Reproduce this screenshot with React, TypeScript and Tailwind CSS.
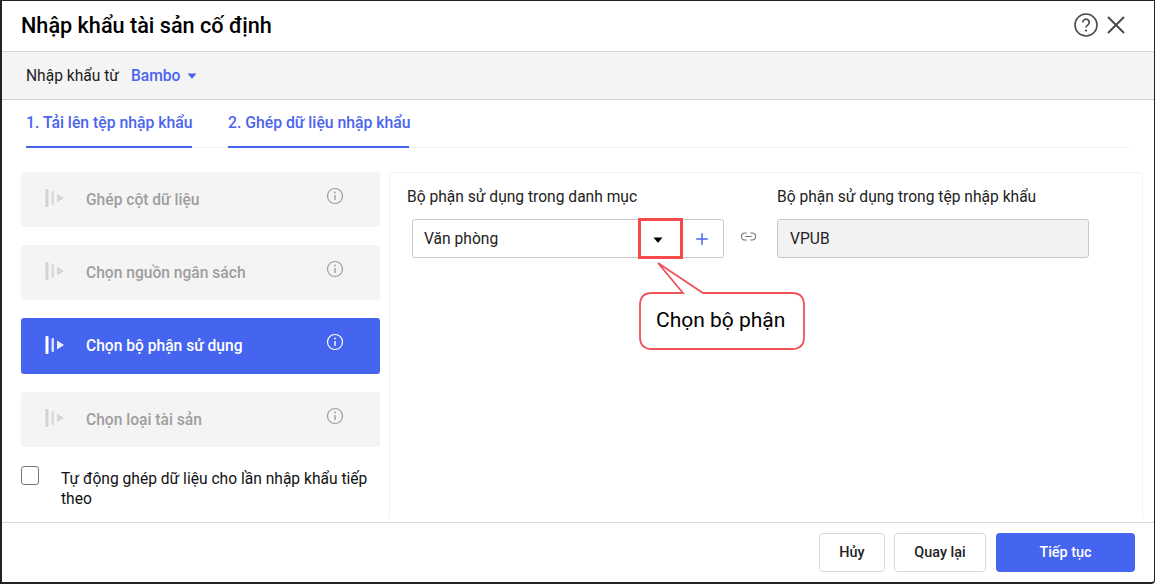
import React from 'react';
import { Plus, Link2 } from 'lucide-react';

const StepIcon = ({ className }: { className: string }) => (
  <svg width="20" height="20" viewBox="0 0 20 20" className={className} fill="currentColor">
    <rect x="0.5" y="1" width="3" height="18" rx="1" />
    <rect x="6.5" y="3" width="2.5" height="14" rx="1" opacity="0.8" />
    <path d="M12 5.5 L19 10 L12 14.5 Z" opacity="0.9" />
  </svg>
);

const InfoIcon = ({ className }: { className: string }) => (
  <svg width="18" height="18" viewBox="0 0 18 18" fill="none" className={className} stroke="currentColor">
    <circle cx="9" cy="9" r="7.5" strokeWidth="1.2" />
    <path d="M9 8v5" strokeWidth="1.4" />
    <circle cx="9" cy="5.5" r="0.9" fill="currentColor" stroke="none" />
  </svg>
);

const Caret = ({ className }: { className: string }) => (
  <svg width="10" height="6" viewBox="0 0 10 6" className={className} fill="currentColor">
    <path d="M0.5 0.5 H9.5 L5.6 5.2 Q5 5.8 4.4 5.2 Z" />
  </svg>
);

const steps = [
  { label: 'Ghép cột dữ liệu', active: false },
  { label: 'Chọn nguồn ngân sách', active: false },
  { label: 'Chọn bộ phận sử dụng', active: true },
  { label: 'Chọn loại tài sản', active: false },
];

export default function App() {
  return (
    <div className="w-[1155px] h-[584px] bg-white overflow-hidden font-['Roboto',sans-serif] text-[#111]">
      <div className="relative h-[584px] w-[1155px] border-l-[2px] border-t border-r border-b-[2px] border-[#222] rounded-br-[4px] flex flex-col">
        <header className="h-[51px] shrink-0 flex items-center justify-between pl-[19px] pr-[29px] border-b border-[#d4d4d4]">
          <h1 className="text-[21.65px] font-medium text-black">Nhập khẩu tài sản cố định</h1>
          <div className="flex items-center gap-[9px] text-[#4a4a4a]">
            <svg width="24" height="24" viewBox="0 0 24 24" fill="none" stroke="currentColor" className="-mt-[2px]">
              <circle cx="12" cy="12" r="11" strokeWidth="1.6" />
              <path d="M8.8 9.4a3.2 3.2 0 1 1 4.9 2.7c-1 .6-1.7 1.2-1.7 2.4" strokeWidth="1.7" />
              <circle cx="12" cy="17.6" r="1.1" fill="currentColor" stroke="none" />
            </svg>
            <svg width="18" height="18" viewBox="0 0 18 18" fill="none" stroke="currentColor" strokeWidth="2" className="-mt-[2px]">
              <path d="M1 1 L17 17 M17 1 L1 17" />
            </svg>
          </div>
        </header>

        <div className="h-[48px] shrink-0 flex items-center pl-[24px] pt-[2px] bg-[#f4f4f4] border-b border-[#d0d0d0] text-[15.6px]">
          <span className="text-[#222]">Nhập khẩu từ</span>
          <span className="ml-[12px] font-medium text-[#4a64f0]">Bambo</span>
          <Caret className="ml-[7px] -mt-[1px] text-[#4a64f0]" />
        </div>

        <div className="mx-[24px] h-[48px] shrink-0 flex gap-[36px] border-b border-[#f0f0f0] text-[15.75px] font-medium text-[#4a64f0]">
          <div className="w-[166px] h-[48px] border-b-2 border-[#4565f0] pt-[13px] leading-[20px] whitespace-nowrap">1. Tải lên tệp nhập khẩu</div>
          <div className="w-[181px] h-[48px] border-b-2 border-[#4565f0] pt-[13px] leading-[20px] whitespace-nowrap">2. Ghép dữ liệu nhập khẩu</div>
        </div>

        <div className="flex-1 flex pl-[19px] pt-[24px] min-h-0">
          <aside className="w-[359px] shrink-0 flex flex-col gap-[18px]">
            {steps.map((s) => (
              <div
                key={s.label}
                className={`rounded-[3px] flex items-center pl-[24px] pr-[36px] ${s.active ? 'h-[56px] bg-[#4565f0] text-white' : 'h-[55px] bg-[#f4f4f4] text-[#9e9e9e]'}`}
              >
                <StepIcon className={`-mt-[3px] ${s.active ? 'text-white' : 'text-[#d2d2d2]'}`} />
                <span className="ml-[21px] pt-[2px] flex-1 text-[15.6px] font-medium">{s.label}</span>
                <InfoIcon className={`-mt-[8px] ${s.active ? 'text-white' : 'text-[#9e9e9e]'}`} />
              </div>
            ))}
            <label className="flex items-start mt-[4px] text-[15.6px] leading-[20px] text-[#111]">
              <span className="w-[18px] h-[19px] mt-[-3px] shrink-0 rounded-[3px] border border-[#777] bg-white" />
              <span className="ml-[22px] w-[315px]">Tự động ghép dữ liệu cho lần nhập khẩu tiếp theo</span>
            </label>
          </aside>

          <section className="relative ml-[9px] w-[754px] mb-[3px] pl-[17px] pt-[14px] rounded-tr-[4px] border-l border-t border-r border-[#f2f2f2]">
            <div className="flex">
              <div className="w-[370px]">
                <div className="text-[15.6px] leading-[20px] text-[#222]">Bộ phận sử dụng trong danh mục</div>
                <div className="mt-[12px] ml-[5px] w-[312px] h-[39px] flex items-center rounded-[3px] border border-[#c8c8c8] pl-[11px] pt-[2px] text-[15.6px] text-[#222]">
                  <span className="flex-1">Văn phòng</span>
                  <Caret className="text-black mr-[30px] mt-[1px]" />
                  <Plus size={18} strokeWidth={2} className="text-[#4a64f0] mr-[12px] -mt-[2px]" />
                </div>
              </div>
              <div className="w-[312px]">
                <div className="text-[15.6px] leading-[20px] text-[#222]">Bộ phận sử dụng trong tệp nhập khẩu</div>
                <div className="mt-[12px] h-[39px] flex items-center rounded-[3px] border border-[#c8c8c8] bg-[#f2f2f2] pl-[12px] pt-[2px] text-[15.6px] text-[#222]">VPUB</div>
              </div>
            </div>
            <Link2 size={17} strokeWidth={1.6} className="absolute left-[350px] top-[55px] text-[#777]" />
          </section>
        </div>

        <footer className="h-[60px] shrink-0 border-t border-[#d5dbe0] flex items-center justify-end gap-[9px] pr-[19px] text-[14.4px] font-medium">
          <button className="w-[66px] h-[39px] rounded-[4px] border border-[#d5d8dc] text-[#222]">Hủy</button>
          <button className="w-[92px] h-[39px] rounded-[4px] border border-[#d5d8dc] text-[#222]">Quay lại</button>
          <button className="w-[139px] h-[39px] ml-[1px] rounded-[4px] bg-[#4565f0] text-white">Tiếp tục</button>
        </footer>

        <div className="absolute left-[636px] top-[217px] w-[45px] h-[41px] border-[3px] border-[#f44a4a]" />
        <svg className="absolute left-[636px] top-[261px]" width="170" height="92" viewBox="0 0 170 92" fill="white" stroke="#f0525a" strokeWidth="1.8">
          <path d="M20 1 L45 31 H14 Q2 31 2 43 V75 Q2 87 14 87 H154 Q166 87 166 75 V43 Q166 31 154 31 H65 Z" />
        </svg>
        <div className="absolute left-[654px] top-[306px] text-[21px] leading-[26px] text-black whitespace-nowrap">Chọn bộ phận</div>
      </div>
    </div>
  );
}
